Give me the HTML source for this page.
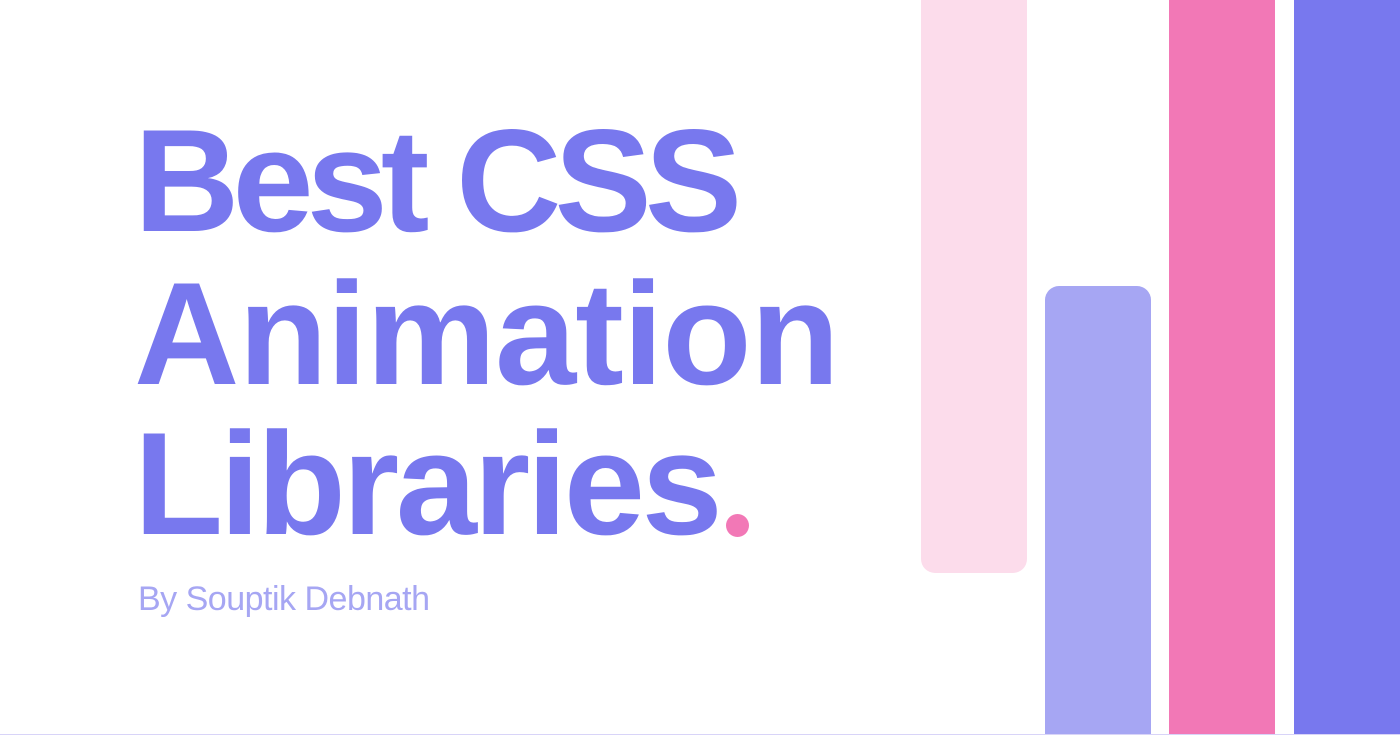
<!DOCTYPE html>
<html><head><style>
html,body{margin:0;padding:0;width:1400px;height:735px;overflow:hidden}
body{position:relative;background:#fff;font-family:"Liberation Sans",sans-serif}
.b{position:absolute}
.l{position:absolute;left:134px;font-weight:bold;font-size:146px;color:#7878EE;line-height:1;white-space:nowrap}
</style></head><body>
<div class="b" style="left:921px;top:-20px;width:106px;height:593px;background:#FCDCEB;border-radius:14px"></div>
<div class="b" style="left:1045px;top:286px;width:106px;height:449px;background:#A6A6F3;border-radius:14px 14px 0 0"></div>
<div class="b" style="left:1169px;top:0;width:106px;height:735px;background:#F278B6"></div>
<div class="b" style="left:1294px;top:0;width:106px;height:735px;background:#7878EE"></div>
<div class="b" style="left:0;top:734px;width:1400px;height:1px;background:#D8D4F8"></div>
<div class="l" style="top:108px;letter-spacing:-7px">Best CSS</div>
<div class="l" style="top:261px;letter-spacing:-1px">Animation</div>
<div class="l" style="top:411px;letter-spacing:-3.5px">Libraries</div>
<div class="b" style="left:726px;top:514px;width:23px;height:23px;border-radius:50%;background:#F278B6"></div>
<div class="b" style="left:138px;top:580px;font-size:34px;color:#A6A6F3;letter-spacing:-0.5px;white-space:nowrap">By Souptik Debnath</div>
</body></html>
